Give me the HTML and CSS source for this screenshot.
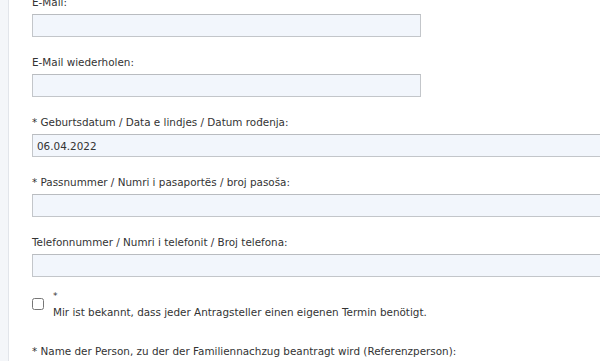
FILE: index.html
```html
<!DOCTYPE html>
<html lang="de">
<head>
  <meta charset="UTF-8">
  <meta name="viewport" content="width=device-width, initial-scale=1.0">
  <title>Terminanfrage</title>
  <link rel="stylesheet" href="styles.css">
</head>
<body>
  <div class="page">
    <div class="sidebar"></div>
    <form class="form">
      <div class="field">
        <label for="email">E-Mail:</label>
        <input type="text" id="email" class="short">
      </div>
      <div class="field">
        <label for="email2">E-Mail wiederholen:</label>
        <input type="text" id="email2" class="short">
      </div>
      <div class="field">
        <label for="dob">* Geburtsdatum / Data e lindjes / Datum rođenja:</label>
        <input type="text" id="dob" class="long" value="06.04.2022">
      </div>
      <div class="field">
        <label for="passport">* Passnummer / Numri i pasaportës / broj pasoša:</label>
        <input type="text" id="passport" class="long">
      </div>
      <div class="field">
        <label for="phone">Telefonnummer / Numri i telefonit / Broj telefona:</label>
        <input type="text" id="phone" class="long">
      </div>
      <div class="check-row">
        <input type="checkbox" id="agree">
        <label for="agree" class="check-text">
          <span class="star">*</span>
          <span>Mir ist bekannt, dass jeder Antragsteller einen eigenen Termin benötigt.</span>
        </label>
      </div>
      <div class="field">
        <label for="ref">* Name der Person, zu der der Familiennachzug beantragt wird (Referenzperson):</label>
      </div>
    </form>
  </div>
</body>
</html>
```

FILE: styles.css
```css
* {
  box-sizing: border-box;
}

body {
  margin: 0;
  overflow: hidden;
  font-family: "DejaVu Sans", Verdana, sans-serif;
  font-size: 10.4px;
  color: #333;
  background-color: #fff;
}

.page {
  display: flex;
  min-height: 361px;
}

.sidebar {
  width: 9px;
  flex-shrink: 0;
  background-color: #f4f6f9;
  border-right: 1px solid #e2e5ea;
}

.form {
  margin-top: -5px;
  padding-left: 23px;
}

.field {
  display: flex;
  flex-direction: column;
  gap: 4px;
  margin-bottom: 18px;
}

.field label {
  line-height: 15px;
}

input[type="text"] {
  height: 23px;
  padding: 0 4px;
  border: 1px solid #c3c6ca;
  border-top-color: #b9bcc0;
  background-color: #f2f6fc;
  font-family: inherit;
  font-size: 10.4px;
  color: #333;
}

.short {
  width: 389px;
}

.long {
  width: 700px;
}

.check-row {
  display: flex;
  align-items: center;
  gap: 9px;
  margin-top: -7px;
  margin-bottom: 24px;
}

.check-row input {
  width: 12px;
  height: 12px;
  margin: 0;
}

.check-text {
  display: flex;
  flex-direction: column;
  line-height: 16px;
}

.star {
  font-size: 9px;
}
```
